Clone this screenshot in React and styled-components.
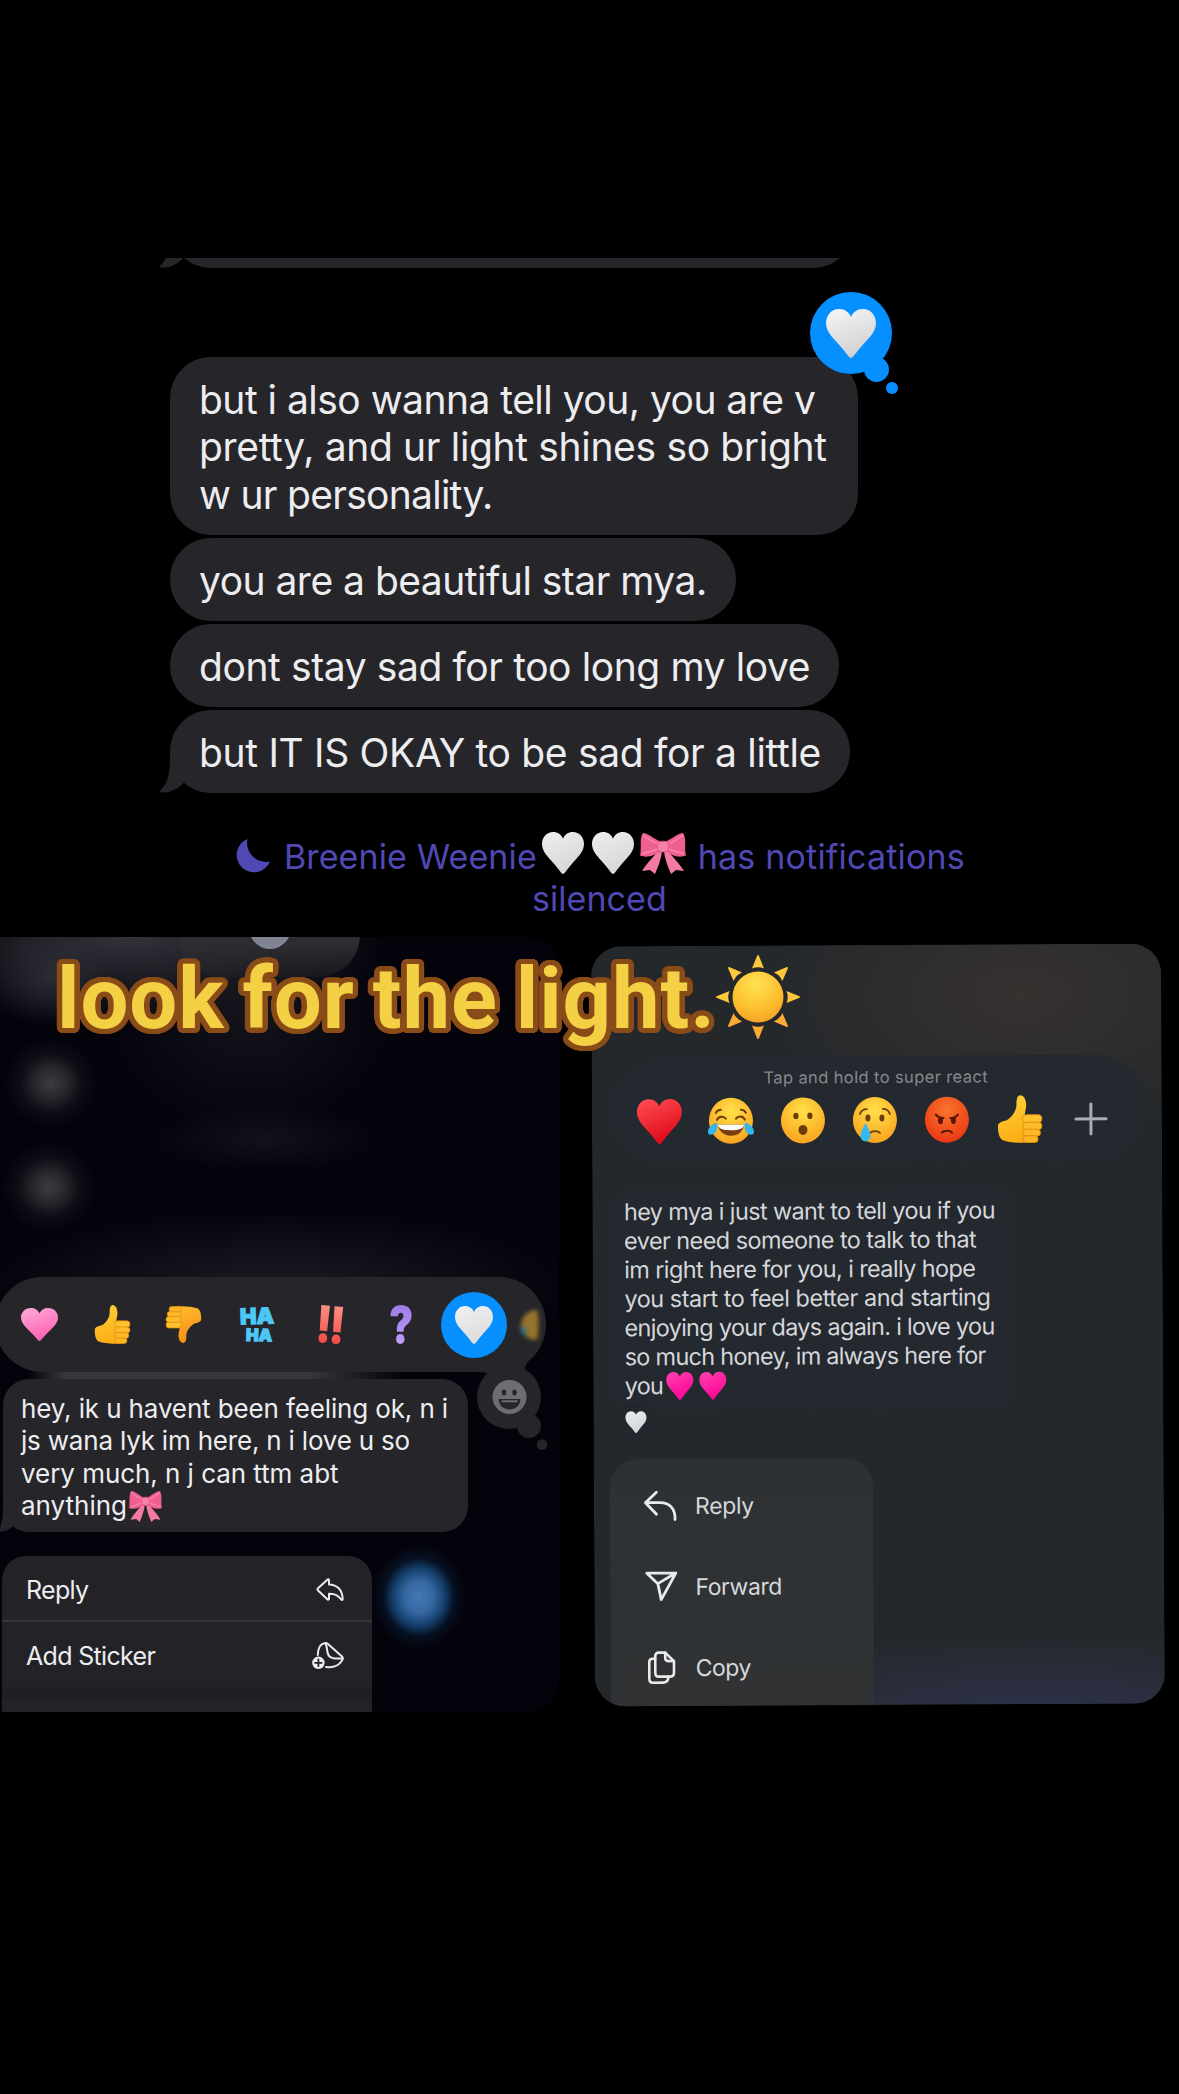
import React from 'react'
import styled, { createGlobalStyle } from 'styled-components'

const GlobalStyle = createGlobalStyle`
* { box-sizing: border-box; }
body {
  margin: 0;
  background: #000;
}
svg { display: block; flex: none; overflow: visible; }
`
const Page = styled.div`
position: relative;
width: 1179px;
height: 2094px;
overflow: hidden;
background: #000;
font-family: Inter, 'Liberation Sans', sans-serif;
color: #ededf0;
`
const Line = styled.span`
display: block;
white-space: nowrap;
letter-spacing: ${p => p.$ls || 0}px;
`

/* top conversation */
const Thread = styled.section`
height: 937px;
padding: 258px 0 0 155px;
`
const Clipped = styled.div`
display: flex;
align-items: flex-end;
height: 10px;
margin-bottom: 89px;
padding-left: 15px;
overflow: hidden;
`
const Bubble = styled.div`
position: relative;
width: ${p => p.$width}px;
height: ${p => p.$height || 83}px;
flex: none;
margin: 0 0 3px 15px;
padding: 18.5px 29px 0;
border-radius: 41px;
background: #26262a;
font-size: 39px;
line-height: 47.7px;
`
const Previous = styled(Bubble)`
margin: 0;
`
const Tail = styled.svg`
position: absolute;
left: -11px;
bottom: 0;
`
const Tapback = styled.div`
position: absolute;
left: 640px;
top: -65px;
width: 82px;
height: 82px;
border-radius: 50%;
background: #068fff;
display: flex;
align-items: center;
justify-content: center;

&::before {
  content: '';
  position: absolute;
  left: 54px;
  top: 65px;
  width: 25px;
  height: 25px;
  border-radius: 50%;
  background: #068fff;
}
&::after {
  content: '';
  position: absolute;
  left: 76px;
  top: 90px;
  width: 12px;
  height: 12px;
  border-radius: 50%;
  background: #068fff;
}
svg {
  position: relative;
}
`
const Notice = styled.div`
display: flex;
flex-direction: column;
width: 890px;
margin-top: 39px;
font-size: 34px;
line-height: 42px;
color: #5049b4;
`
const NoticeRow = styled.div`
display: flex;
align-items: center;
height: 42px;
padding-left: ${p => p.$left}px;
`
const NoticeText = styled(Line)`
margin-top: 7px;
`
const Moon = styled.svg`
margin-top: 5px;
`
const Gap = styled.span`
width: ${p => p.$w}px;
flex: none;
`

/* two captures side by side */
const Captures = styled.section`
display: flex;
align-items: flex-start;
`
const NightPanel = styled.div`
position: relative;
width: 559px;
height: 775px;
padding-top: 340px;
overflow: hidden;
border-radius: 0 30px 30px 0;
background:
  radial-gradient(ellipse 60px 50px at 50px 40px, rgba(56, 56, 64, 0.6), transparent),
  radial-gradient(ellipse 48px 46px at 51px 146px, #3b3b43 0%, rgba(48, 48, 54, 0.85) 30%, rgba(30, 30, 36, 0.35) 65%, transparent 100%),
  radial-gradient(ellipse 48px 46px at 49px 250px, #3b3b43 0%, rgba(48, 48, 54, 0.85) 30%, rgba(30, 30, 36, 0.35) 65%, transparent 100%),
  radial-gradient(ellipse 120px 34px at 265px 202px, rgba(22, 21, 28, 0.8), transparent),
  radial-gradient(ellipse 300px 80px at 275px 350px, rgba(34, 33, 41, 0.8), transparent),
  radial-gradient(ellipse 260px 90px at 130px 0px, #33333b 0%, rgba(30, 30, 37, 0.8) 50%, transparent 100%),
  radial-gradient(ellipse 150px 120px at 250px 80px, rgba(26, 26, 33, 0.7), transparent),
  #04030c;
`
const Header = styled.div`
position: absolute;
left: 179px;
top: -44px;
width: 181px;
height: 84px;
border-radius: 42px;
background: linear-gradient(#2c2c31 60%, rgba(36, 36, 40, 0.4));

&::after {
  content: '';
  position: absolute;
  left: 70px;
  top: 14px;
  width: 42px;
  height: 42px;
  border-radius: 50%;
  background: #7f8492;
}
`
const ReactionBar = styled.div`
position: relative;
display: flex;
align-items: center;
width: 551px;
height: 95px;
margin-left: -5px;
padding-left: 8px;
border-radius: 48px;
background: #26262a;
`
const Slot = styled.div`
position: relative;
display: flex;
align-items: center;
justify-content: center;
width: ${p => p.$w || 72.5}px;
height: 66px;
flex: none;
`
const Picked = styled.div`
display: flex;
align-items: center;
justify-content: center;
width: 66px;
height: 66px;
border-radius: 50%;
background: #068fff;
`
const Faded = styled.div`
filter: blur(2px);
opacity: 0.7;
`
const Haha = styled.div`
display: flex;
flex-direction: column;
align-items: center;
font-weight: 900;
color: #4cc8f7;
-webkit-text-stroke: 1.2px #4cc8f7;
`
const HaTop = styled.span`
height: 21px;
font-size: 22px;
line-height: 22px;
transform: rotate(-2deg);
`
const HaBottom = styled.span`
height: 18px;
padding-left: 5px;
font-size: 17px;
line-height: 18px;
transform: rotate(2deg);
`
const Mark = styled.span`
font: 900 ${p => p.$size}px/50px Inter, sans-serif;
letter-spacing: ${p => p.$ls || 0}px;
background: linear-gradient(${p => p.$from}, ${p => p.$to});
-webkit-background-clip: text;
-webkit-text-fill-color: transparent;
transform: rotate(${p => p.$tilt || 0}deg) scaleX(${p => p.$sx || 1});
`
const More = styled.svg`
position: absolute;
left: 477px;
top: 86px;
`
const Glow = styled.div`
height: 7px;
margin-left: 28px;
width: 375px;
background: linear-gradient(90deg, transparent, #36363b 10%, #36363b 75%, transparent);
`
const NightBubble = styled.div`
position: relative;
width: 464.5px;
height: 153px;
margin-left: 3px;
padding: 14px 0 0 18px;
border-radius: 26px;
background: #26262a;
font-size: 26px;
line-height: 32.3px;
`
const SmallTail = styled.svg`
position: absolute;
left: -6px;
bottom: 0;
`
const Inline = styled.div`
display: flex;
align-items: center;
gap: ${p => p.$gap || 0}px;
height: ${p => p.$h}px;
`
const Menu = styled.div`
width: 370px;
height: 170px;
margin: 24px 0 0 2px;
border-radius: 24px 24px 0 0;
background: #232327;
font-size: 25px;
line-height: 30px;
`
const MenuRow = styled.div`
display: flex;
align-items: center;
justify-content: space-between;
height: ${p => (p.$last ? 76 : 66)}px;
padding: 3px 28px 0 24px;
border-bottom: ${p => (p.$last ? '11px solid #1f1f23' : '2px solid #353539')};
`
const BlueBlur = styled.div`
position: absolute;
left: 372px;
top: 608px;
width: 94px;
height: 104px;
background: radial-gradient(closest-side, #4478b2 0%, #3568a2 30%, #153f6c 55%, rgba(8, 30, 56, 0.5) 75%, transparent 100%);
`
const SlateCard = styled.div`
width: 570px;
height: 760px;
margin: 7.5px 0 0 33.5px;
padding: 111px 0 0 16px;
overflow: hidden;
border-radius: 30px;
transform: rotate(-0.3deg);
background:
  radial-gradient(ellipse 260px 150px at 430px 50px, #373130 0%, rgba(51, 47, 47, 0.7) 45%, transparent 100%),
  radial-gradient(ellipse 400px 75px at 440px 765px, #2d3148, transparent),
  #24282b;
`
const SuperBar = styled.div`
width: 540px;
height: 108px;
border-radius: 54px;
background: #24282f;
`
const Hint = styled.div`
padding: 11px 4px 0 0;
text-align: center;
font-size: 16.5px;
line-height: 20px;
letter-spacing: 0.38px;
color: #85888e;
`
const Faces = styled.div`
display: flex;
padding: 0 0 0 15px;
`
const Face = styled.div`
display: flex;
align-items: center;
justify-content: center;
width: 72px;
height: 66px;
`
const SlateBubble = styled.div`
width: 409px;
height: 225px;
margin-top: 22px;
padding: 10px 0 0 15.5px;
border-radius: 22px;
background: #24282f;
font-size: 23.5px;
line-height: 29px;
color: #d4d6da;
`
const HeartPill = styled.div`
display: flex;
align-items: center;
justify-content: center;
width: 40px;
height: 36px;
margin: -8px 0 0 6px;
border-radius: 18px;
background: #23262c;
`
const SlateMenu = styled.div`
width: 263px;
height: 300px;
margin-top: 19px;
padding-top: 6px;
border-radius: 28px 28px 0 0;
background: linear-gradient(#2e3133, #303234 85%, #333338);
`
const SlateRow = styled.div`
display: flex;
align-items: center;
height: 81px;
padding-left: 32.5px;
font-size: 23px;
color: #d6d8da;
`
const IconBox = styled.div`
display: flex;
align-items: center;
justify-content: center;
width: 36px;
margin-right: 16.5px;
`

// round outline made of shadows, so the corners stay soft
const outline = (radius, color) =>
  Array.from({ length: 32 }, (_, i) => {
    const a = (i / 32) * Math.PI * 2
    return `${(Math.cos(a) * radius).toFixed(2)}px ${(Math.sin(a) * radius).toFixed(2)}px 0 ${color}`
  }).join(', ')

const Title = styled.h1`
position: absolute;
left: 57px;
top: 949px;
margin: 0;
font: 700 85px/100px Roboto, 'Liberation Sans', sans-serif;
letter-spacing: 0.9px;
word-spacing: -4px;
white-space: nowrap;
color: #f4d044;
text-shadow: ${outline(5.4, '#8a4c18')}, ${outline(3, '#8a4c18')};
`
const SunSpot = styled.div`
position: absolute;
left: 716px;
top: 955px;
`

const Heart = ({ w, h, from, to, id }) => (
  <svg width={w} height={h} viewBox='0 0 40 40' preserveAspectRatio='none'>
    <defs>
      <linearGradient id={id} x1='0.2' y1='0' x2='0.6' y2='1'>
        <stop offset='0' stopColor={from} />
        <stop offset='1' stopColor={to} />
      </linearGradient>
    </defs>
    <path d='M20 40C18.500 40 16 35.500 12 31C6 24 0 19 0 11.500C0 5 4.500 0 10.500 0C15 0 18.500 2.500 20 6.500C21.500 2.500 25 0 29.500 0C35.500 0 40 5 40 11.500C40 19 34 24 28 31C24 35.500 21.500 40 20 40Z' fill={`url(#${id})`} />
  </svg>
)

const Bow = ({ w, h }) => (
  <svg width={w} height={h} viewBox='0 0 46 40' preserveAspectRatio='none'>
    <path d='M18 17C14 23 7 29 2 37L10 36L15 40C18 33 21 26 22 18Z' fill='#f47aa3' />
    <path d='M28 17C32 23 39 29 44 37L36 36L31 40C28 33 25 26 24 18Z' fill='#f47aa3' />
    <path d='M20 8C14 6 8 0 3 0C-1 5 2 16 0 22C8 25 15 21 20 18Z' fill='#ef5f92' />
    <path d='M26 8C32 6 38 0 43 0C47 5 44 16 46 22C38 25 31 21 26 18Z' fill='#ef5f92' />
    <path d='M19 11C12 9 7 5 3 2M19 15C13 17 8 19 2 20M27 11C34 9 39 5 43 2M27 15C33 17 38 19 44 20' fill='none' stroke='#fb82ac' strokeWidth='1.600' />
    <rect x='17.500' y='8' width='11' height='10.500' rx='4' fill='#f97faa' stroke='#d94a7c' strokeWidth='0.800' />
  </svg>
)

const Thumb = ({ w, h, down, id }) => (
  <svg width={w} height={h} viewBox='0 0 46 48' preserveAspectRatio='none'>
    <defs>
      <linearGradient id={id} x1='0' y1='0' x2='0.300' y2='1'>
        <stop offset='0' stopColor={down ? '#f58a0c' : '#ffd23c'} />
        <stop offset='1' stopColor={down ? '#ffb52e' : '#fcae14'} />
      </linearGradient>
    </defs>
    <g transform={down ? 'rotate(180 23 24)' : undefined}>
      <path d='M1 31C1 27 6 26 10 25C15 22 19 17 20 11C20 6 20 1 23.500 0C28 0 30 5 30 10C30 14 28.500 17 28.500 20L42 21L41 46C30 48.500 15 48 6 45C2 43 1 37 1 31Z' fill={`url(#${id})`} />
      <rect x='26' y='19.500' width='20' height='8' rx='4' fill='#ffc02d' stroke='#dc8a0c' strokeWidth='0.900' />
      <rect x='26.500' y='27' width='19.500' height='7.500' rx='3.700' fill='#ffbc2a' stroke='#dc8a0c' strokeWidth='0.900' />
      <rect x='26.500' y='34' width='18' height='7' rx='3.500' fill='#ffb827' stroke='#dc8a0c' strokeWidth='0.900' />
      <rect x='26.500' y='40.500' width='15.500' height='6.800' rx='3.300' fill='#fdb424' stroke='#dc8a0c' strokeWidth='0.900' />
    </g>
  </svg>
)

const Emoji = ({ id, from, to, children }) => (
  <svg width='46' height='46' viewBox='0 0 46 46'>
    <defs>
      <radialGradient id={id} cx='0.5' cy='0.3' r='0.75'>
        <stop offset='0' stopColor={from} />
        <stop offset='1' stopColor={to} />
      </radialGradient>
    </defs>
    <ellipse cx='23' cy='23' rx='22' ry='23' fill={`url(#${id})`} />
    {children}
  </svg>
)

const Joy = () => (
  <Emoji id='joy' from='#ffe04a' to='#f9a01b'>
    <path d='M9 22C11 18 16 18 18 21M28 21C30 18 35 18 37 22M8 15C9 13 11 12 13 12M33 12C35 12 37 13 38 15' fill='none' stroke='#6b3d08' strokeWidth='2' strokeLinecap='round' />
    <path d='M10 27H36C35 34 30 38 23 38S11 34 10 27Z' fill='#7a3f10' />
    <path d='M10 27H36C35.500 31 31 32.500 23 32.500S10.500 31 10 27Z' fill='#fff' />
    <path d='M9 25C4 26 0 30 0 34C0 38 5 38 8 34C9.500 31 9.500 28 9 25Z' fill='#33b6ee' />
    <path d='M37 25C42 26 46 30 46 34C46 38 41 38 38 34C36.500 31 36.500 28 37 25Z' fill='#33b6ee' />
  </Emoji>
)

const Wow = () => (
  <Emoji id='wow' from='#ffe04a' to='#f9a01b'>
    <ellipse cx='16' cy='18.500' rx='2.600' ry='3.300' fill='#6b3d08' />
    <ellipse cx='30' cy='18.500' rx='2.600' ry='3.300' fill='#6b3d08' />
    <ellipse cx='23' cy='32.500' rx='4.500' ry='5' fill='#6b3d08' />
  </Emoji>
)

const Cry = () => (
  <Emoji id='cry' from='#ffe04a' to='#f9a01b'>
    <ellipse cx='16' cy='21' rx='2.500' ry='3.500' fill='#6b3d08' />
    <ellipse cx='30' cy='21' rx='2.500' ry='3.500' fill='#6b3d08' />
    <path d='M8 17C9 14 12 12 15 12M38 17C37 14 34 12 31 12M18 36C20 33.500 26 33.500 28 36' fill='none' stroke='#6b3d08' strokeWidth='1.800' strokeLinecap='round' />
    <path d='M13.500 26C11 31 8.500 35 8.500 39C8.500 46 18.500 46 18.500 39C18.500 35 16 31 13.500 26Z' fill='#36b9ef' />
  </Emoji>
)

const Angry = () => (
  <Emoji id='angry' from='#f9752c' to='#ea3312'>
    <ellipse cx='16.500' cy='24' rx='2.500' ry='3.500' fill='#5a1608' />
    <ellipse cx='29.500' cy='24' rx='2.500' ry='3.500' fill='#5a1608' />
    <path d='M12 18C13.500 20 16 21.500 19.500 21.500M34 18C32.500 20 30 21.500 26.500 21.500M18 36C20 33.500 26 33.500 28 36' fill='none' stroke='#5a1608' strokeWidth='2.200' strokeLinecap='round' />
  </Emoji>
)

const Sun = () => (
  <svg width='84' height='84' viewBox='-42 -42 84 84'>
    <defs>
      <radialGradient id='disc' cx='0.45' cy='0.25' r='0.8'>
        <stop offset='0' stopColor='#ffe352' />
        <stop offset='0.6' stopColor='#fcc02f' />
        <stop offset='1' stopColor='#f3a024' />
      </radialGradient>
    </defs>
    {[0, 45, 90, 135, 180, 225, 270, 315].map(a => (
      <path key={a} d='M-6 -28.500Q0 -31 6 -28.500L0.800 -41.500Q0 -42.500 -0.800 -41.500Z' fill={a > 90 && a < 270 ? '#f9ab35' : '#fdc73c'} transform={`rotate(${a})`} />
    ))}
    <circle r='25.500' fill='url(#disc)' />
  </svg>
)

const menuIcon = { fill: 'none', stroke: '#e8eaec', strokeLinecap: 'round', strokeLinejoin: 'round' }

const ShareArrow = () => (
  <svg width='28' height='24' viewBox='0 0 28 24' {...menuIcon} strokeWidth='2'>
    <path d='M13 2.200C13 1.200 12 1 11.300 1.700L1.800 10.400Q1 11.300 1.800 12.200L11.300 21.300C12 22 13 21.700 13 20.700V15.700C19 15.500 22.500 17.500 25 21.300C26 22.500 26.800 22 26.700 20.500C26 12 21.500 7 13 6.600Z' />
  </svg>
)

const Sticker = () => (
  <svg width='32' height='28' viewBox='0 0 32 28' {...menuIcon} strokeWidth='2'>
    <path d='M5.800 13C6 6.500 8.500 2 12.500 1.200C14 0.900 15 1.200 16 2L30 14.500C31 15.500 31 17 30 18.500C27 23.500 22 26 14 25' />
    <path d='M13.500 1.500C16 6 14 11 17.500 14.500C21 17.500 27 16.500 30.500 16.500' />
    <circle cx='6.400' cy='20.800' r='6.200' fill='#f0f0f2' stroke='none' />
    <path d='M6.400 17.500V24.100M3.100 20.800H9.700' stroke='#232327' strokeWidth='1.800' />
  </svg>
)

const Smiley = () => (
  <More width='76' height='90' viewBox='0 0 76 90'>
    <circle cx='37' cy='34' r='32' fill='#26262a' />
    <path d='M8 0L56 0Q49 5 58 12L20 14Q17 9 6 9Z' fill='#26262a' />
    <circle cx='57' cy='63' r='12' fill='#26262a' />
    <circle cx='70' cy='81.500' r='5.200' fill='#26262a' />
    <circle cx='37.500' cy='34' r='17' fill='#6d6d72' />
    <ellipse cx='32' cy='29.500' rx='2.200' ry='3' fill='#26262a' />
    <ellipse cx='42.500' cy='29.500' rx='2.200' ry='3' fill='#26262a' />
    <path d='M26.500 36H48.500C48 43 43 46.500 37.500 46.500S27 43 26.500 36Z' fill='#26262a' />
    <path d='M29.500 38.300H45.500' stroke='#6d6d72' strokeWidth='2' />
  </More>
)

export default () => (
  <Page>
    <GlobalStyle />
    <Thread>
      <Clipped>
        <Previous $width={684}>
          <Tail width='30' height='48' viewBox='0 0 30 48'>
            <path d='M11 0C11 22 12 36 0 47C9 49 19 45 26 36Z' fill='#26262a' />
          </Tail>
        </Previous>
      </Clipped>
      <Bubble $width={687.5} $height={178}>
        <Line $ls={-0.52}>but i also wanna tell you, you are v</Line>
        <Line $ls={-0.34}>pretty, and ur light shines so bright</Line>
        <Line $ls={-0.72}>w ur personality.</Line>
        <Tapback>
          <Heart w={50} h={49} from='#f4f4f5' to='#cfcfd2' id='tapback' />
        </Tapback>
      </Bubble>
      <Bubble $width={566}>
        <Line $ls={-0.52}>you are a beautiful star mya.</Line>
      </Bubble>
      <Bubble $width={669}>
        <Line $ls={-0.405}>dont stay sad for too long my love</Line>
      </Bubble>
      <Bubble $width={679.5}>
        <Tail width='30' height='48' viewBox='0 0 30 48'>
          <path d='M11 0C11 22 12 36 0 47C9 49 19 45 26 36Z' fill='#26262a' />
        </Tail>
        <Line $ls={-0.317}>but IT IS OKAY to be sad for a little</Line>
      </Bubble>
      <Notice>
        <NoticeRow $left={80}>
          <Moon width='36' height='36' viewBox='0 0 36 36'>
            <path d='M12.500 1A17.300 17.300 0 1 0 35 23.500A19 19 0 0 1 12.500 1Z' fill='#5049b4' />
          </Moon>
          <Gap $w={13} />
          <NoticeText $ls={0.1}>Breenie Weenie</NoticeText>
          <Gap $w={5} />
          <Heart w={42} h={42} from='#ececec' to='#d6d6d6' id='n1' />
          <Gap $w={8} />
          <Heart w={42} h={42} from='#ececec' to='#d6d6d6' id='n2' />
          <Gap $w={6} />
          <Bow w={46} h={41} />
          <Gap $w={12} />
          <NoticeText $ls={0.18}>has notifications</NoticeText>
        </NoticeRow>
        <NoticeRow $left={377}>
          <NoticeText $ls={0.05}>silenced</NoticeText>
        </NoticeRow>
      </Notice>
    </Thread>
    <Captures>
      <NightPanel>
        <Header />
        <ReactionBar>
          <Smiley />
          <Slot><Heart w={37} h={33} from='#ffa6d6' to='#ff5fb0' id='pink' /></Slot>
          <Slot><Thumb w={36} h={39} id='up' /></Slot>
          <Slot><Thumb w={36} h={37} down id='down' /></Slot>
          <Slot>
            <Haha>
              <HaTop>HA</HaTop>
              <HaBottom>HA</HaBottom>
            </Haha>
          </Slot>
          <Slot><Mark $size={51} $ls={-3} $from='#ff9a90' $to='#ee3f38' $tilt={5} $sx={0.82}>!!</Mark></Slot>
          <Slot><Mark $size={51} $from='#9a78e6' $to='#c0a2fa' $sx={0.8}>?</Mark></Slot>
          <Slot>
            <Picked><Heart w={38} h={38} from='#efeff0' to='#dcdcde' id='picked' /></Picked>
          </Slot>
          <Slot $w={39}>
            <Faded>
              <svg width='22' height='32' viewBox='0 0 22 32'>
                <path d='M18 1C8 1 2 9 2 17C2 26 9 31 18 31C20 25 20 7 18 1Z' fill='#c8962c' />
                <path d='M1 18C5 16 9 20 8 26C4 27 1 24 1 18Z' fill='#3f8fa8' />
              </svg>
            </Faded>
          </Slot>
        </ReactionBar>
        <Glow />
        <NightBubble>
          <SmallTail width='24' height='30' viewBox='0 0 24 30'>
            <path d='M6 0C6 14 6 24 0 29C6 31 13 28 18 22Z' fill='#26262a' />
          </SmallTail>
          <Line $ls={-0.131}>hey, ik u havent been feeling ok, n i</Line>
          <Line $ls={-0.197}>js wana lyk im here, n i love u so</Line>
          <Line $ls={-0.047}>very much, n j can ttm abt</Line>
          <Inline $h={32.3} $gap={2}>
            <Line>anything</Line>
            <Bow w={33} h={31} />
          </Inline>
        </NightBubble>
        <Menu>
          <MenuRow>
            <Line $ls={-0.667}>Reply</Line>
            <ShareArrow />
          </MenuRow>
          <MenuRow $last>
            <Line $ls={-0.67}>Add Sticker</Line>
            <Sticker />
          </MenuRow>
        </Menu>
        <BlueBlur />
      </NightPanel>
      <SlateCard>
        <SuperBar>
          <Hint>Tap and hold to super react</Hint>
          <Faces>
            <Face><Heart w={45} h={45} from='#ff4a50' to='#dd0716' id='red' /></Face>
            <Face><Joy /></Face>
            <Face><Wow /></Face>
            <Face><Cry /></Face>
            <Face><Angry /></Face>
            <Face><Thumb w={45} h={48} id='like' /></Face>
            <Face>
              <svg width='32' height='32' viewBox='0 0 32 32'>
                <path d='M16 1V31M1 16H31' stroke='#a9acb1' strokeWidth='3' strokeLinecap='round' />
              </svg>
            </Face>
          </Faces>
        </SuperBar>
        <SlateBubble>
          <Line $ls={-0.649}>hey mya i just want to tell you if you</Line>
          <Line $ls={-0.59}>ever need someone to talk to that</Line>
          <Line $ls={-0.631}>im right here for you, i really hope</Line>
          <Line $ls={-0.495}>you start to feel better and starting</Line>
          <Line $ls={-0.709}>enjoying your days again. i love you</Line>
          <Line $ls={-0.745}>so much honey, im always here for</Line>
          <Inline $h={29}>
            <Line $ls={-0.9}>you</Line>
            <Gap $w={3} />
            <Heart w={27} h={28} from='#ff3cae' to='#fb0497' id='p1' />
            <Gap $w={6} />
            <Heart w={27} h={28} from='#ff3cae' to='#fb0497' id='p2' />
          </Inline>
        </SlateBubble>
        <HeartPill>
          <Heart w={21} h={22} from='#e8eaec' to='#cfd6d8' id='pill' />
        </HeartPill>
        <SlateMenu>
          <SlateRow>
            <IconBox>
              <svg width='34' height='32' viewBox='0 0 34 32' {...menuIcon} strokeWidth='2.800'>
                <path d='M12.500 2L1.500 12.500L12.500 24M1.500 12.500H16C26 12.500 31.500 19 31 29.500' />
              </svg>
            </IconBox>
            <Line $ls={-0.313}>Reply</Line>
          </SlateRow>
          <SlateRow>
            <IconBox>
              <svg width='32' height='31' viewBox='0 0 32 31' {...menuIcon} strokeWidth='2.800'>
                <path d='M1.500 2H30.500L15.800 28.500L12.500 12.500ZM12.500 12.500L30.500 2' />
              </svg>
            </IconBox>
            <Line $ls={-0.415}>Forward</Line>
          </SlateRow>
          <SlateRow>
            <IconBox>
              <svg width='28' height='33' viewBox='0 0 28 33' {...menuIcon} strokeWidth='2.600'>
                <path d='M17.500 1.500H11C8.800 1.500 7.500 3 7.500 5V21.500C7.500 24 8.800 25.500 11 25.500H22.500C25 25.500 26.200 24 26.200 21.500V10Z' />
                <path d='M17.500 1.500V7C17.500 9 18.500 10 20.500 10H26.200' />
                <path d='M7.500 7.500H5C2.800 7.500 1.500 9 1.500 11V27.500C1.500 30 2.800 31.500 5 31.500H15.500C18.500 31.500 20.500 29.500 20.500 25.500' />
              </svg>
            </IconBox>
            <Line $ls={-0.538}>Copy</Line>
          </SlateRow>
        </SlateMenu>
      </SlateCard>
    </Captures>
    <Title>look for the light.</Title>
    <SunSpot><Sun /></SunSpot>
  </Page>
)
